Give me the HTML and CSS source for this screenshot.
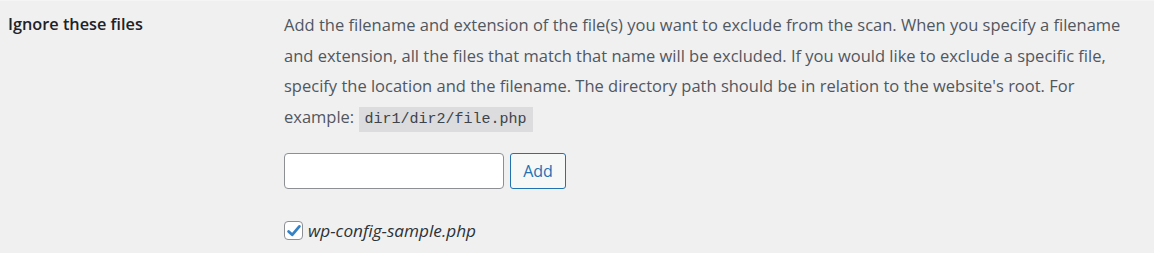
FILE: index.html
```html
<!DOCTYPE html>
<html>
<head>
<meta charset="utf-8">
<link rel="stylesheet" href="styles.css">
</head>
<body>
<div class="row">
  <div class="th">Ignore these files</div>
  <div class="td">
    <p class="desc">Add the filename and extension of the file(s) you want to exclude from the scan. When you specify a filename and extension, all the files that match that name will be excluded. If you would like to exclude a specific file, specify the location and the filename. The directory path should be in relation to the website's root. For example: <code>dir1/dir2/file.php</code></p>
    <div class="add-row">
      <input type="text" class="text-input">
      <button class="btn">Add</button>
    </div>
    <label class="check">
      <span class="box"><svg width="16" height="16" viewBox="0 0 16 16"><path d="M2.6 8.4 L6.2 11.8 L13.4 3.4" fill="none" stroke="#3582c4" stroke-width="2.8" stroke-linecap="round" stroke-linejoin="round"/></svg></span>
      <span class="fname">wp-config-sample.php</span>
    </label>
  </div>
</div>
</body>
</html>
```
FILE: styles.css
```css
html, body {
  margin: 0;
  padding: 0;
  background: #f0f0f1;
}
body {
  border-top: 1px solid #f5f5f5;
  font-family: "Open Sans", "Noto Sans", sans-serif;
  color: #1d2327;
}
.row {
  display: flex;
  padding-left: 8px;
}
.th {
  width: 276px;
  flex: none;
  font-weight: 600;
  font-size: 16.3px;
  line-height: 20px;
  padding-top: 13px;
  color: #1d2327;
}
.td {
  flex: 1;
  padding-top: 9px;
  padding-right: 20px;
}
.desc {
  margin: 0;
  font-size: 16.5px;
  line-height: 30.5px;
  color: #50575e;
}
code {
  display: inline-block;
  font-family: "Liberation Mono", "DejaVu Sans Mono", monospace;
  font-size: 15px;
  line-height: 19px;
  background: #dcdcde;
  padding: 3px 6px;
  color: #3c434a;
}
.add-row {
  display: flex;
  gap: 6px;
  margin-top: 21px;
}
.text-input {
  box-sizing: border-box;
  width: 220px;
  height: 36px;
  border: 1px solid #8c8f94;
  border-radius: 4px;
  background: #fff;
  margin: 0;
}
.btn {
  box-sizing: border-box;
  width: 56px;
  height: 36px;
  border: 1px solid #2271b1;
  border-radius: 3px;
  background: #f6f7f7;
  color: #2271b1;
  font-family: inherit;
  font-size: 16px;
  padding: 0;
}
.check {
  display: flex;
  align-items: center;
  gap: 5px;
  margin-top: 30px;
}
.box {
  box-sizing: border-box;
  width: 19px;
  height: 19px;
  border: 1px solid #8c8f94;
  border-radius: 4px;
  background: #fff;
  display: flex;
  align-items: center;
  justify-content: center;
}
.fname {
  font-style: italic;
  font-size: 17.2px;
  color: #2c3338;
}
```
